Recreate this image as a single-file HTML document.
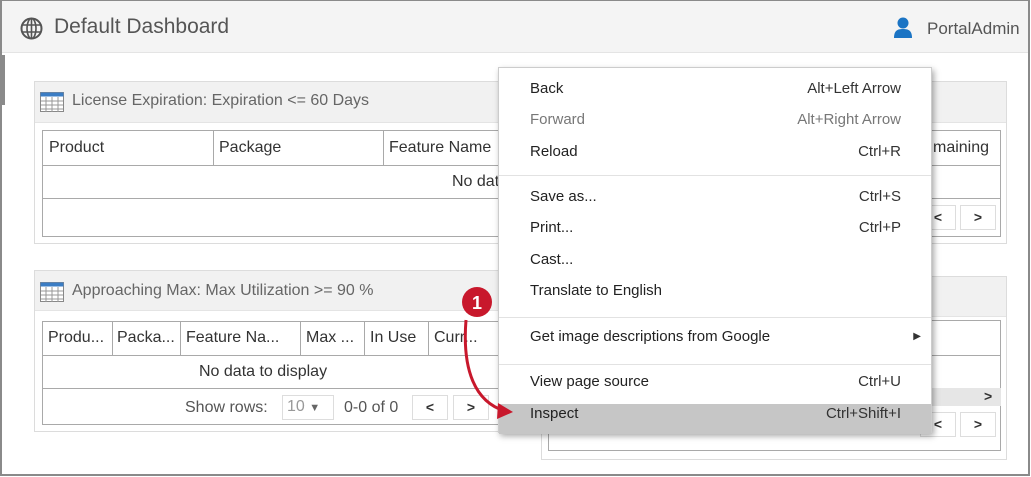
<!DOCTYPE html>
<html><head><style>
*{margin:0;padding:0;box-sizing:border-box}
body{width:1031px;height:477px;overflow:hidden;background:#fff;font-family:"Liberation Sans",sans-serif;position:relative}
.a{position:absolute}
.frame{left:0;top:0;width:1030px;height:476px;border:2px solid #8a8a8a;border-top-width:1px}
.hdr{left:2px;top:1px;width:1026px;height:52px;background:#f4f4f4;border-bottom:1px solid #e4e4e4}
.panel{border:1px solid #dcdcdc;background:#fff}
.ph{background:#f1f1f1;border-bottom:1px solid #e4e4e4}
.pt{font-size:16px;color:#666}
.tbl{border:1px solid #a9a9a9}
.cell{font-size:16px;color:#333;white-space:nowrap}
.vl{width:1px;background:#a9a9a9}
.hl{height:1px;background:#a9a9a9}
.btn{border:1px solid #ddd;background:#fff;width:36px;height:25px;font-size:14px;color:#333;text-align:center;line-height:22px;font-weight:bold}
.menu{left:498px;top:67px;width:434px;height:366px;background:#fff;border:1px solid #ccc;box-shadow:2px 3px 6px rgba(0,0,0,.35)}
.mi{position:absolute;left:31px;right:30px;font-size:15px;color:#222;height:20px;line-height:20px}
.mi span{float:right;color:#333}
.sep{position:absolute;left:0;right:0;height:1px;background:#e2e2e2}
</style></head><body>
<div class="a hdr"></div>
<svg class="a" style="left:20px;top:17px" width="23" height="23" viewBox="0 0 23 23"><circle cx="11.5" cy="11.5" r="10" fill="none" stroke="#555" stroke-width="2"/><ellipse cx="11.5" cy="11.5" rx="4.5" ry="10" fill="none" stroke="#555" stroke-width="1.6"/><path d="M2 8h19M2 15h19M11.5 1.5v20" stroke="#555" stroke-width="1.6"/></svg>
<div class="a" style="left:54px;top:15px;font-size:21px;color:#555">Default Dashboard</div>
<svg class="a" style="left:893px;top:17px" width="20" height="22" viewBox="0 0 20 22"><circle cx="10" cy="6" r="5.5" fill="#1b74c4"/><path d="M1 21c0-7 3-9 9-9s9 2 9 9z" fill="#1b74c4"/></svg>
<div class="a" style="left:927px;top:19px;font-size:17px;color:#555">PortalAdmin</div>
<div class="a" style="left:0;top:55px;width:5px;height:50px;background:#8a8a8a"></div>

<!-- panel 1 -->
<div class="a panel" style="left:34px;top:81px;width:973px;height:163px"></div>
<div class="a ph" style="left:35px;top:82px;width:971px;height:41px"></div>
<svg class="a" style="left:40px;top:92px" width="24" height="20" viewBox="0 0 24 20"><rect x="0.5" y="0.5" width="23" height="19" fill="#fff" stroke="#888"/><rect x="0.5" y="0.5" width="23" height="4" fill="#3b7dc4"/><path d="M6 5v15M12 5v15M18 5v15M1 9h22M1 13h22M1 17h22" stroke="#999" stroke-width="1"/></svg>
<div class="a pt" style="left:72px;top:92px">License Expiration: Expiration &lt;= 60 Days</div>
<div class="a tbl" style="left:42px;top:130px;width:959px;height:107px"></div>
<div class="a hl" style="left:42px;top:165px;width:959px"></div>
<div class="a hl" style="left:42px;top:198px;width:959px"></div>
<div class="a vl" style="left:213px;top:130px;height:35px"></div>
<div class="a vl" style="left:383px;top:130px;height:35px"></div>
<div class="a cell" style="left:49px;top:139px">Product</div>
<div class="a cell" style="left:219px;top:139px">Package</div>
<div class="a cell" style="left:389px;top:139px">Feature Name</div>
<div class="a cell" style="left:933px;top:139px">maining</div>
<div class="a cell" style="left:452px;top:173px">No data</div>
<div class="a btn" style="left:920px;top:205px">&lt;</div>
<div class="a btn" style="left:960px;top:205px">&gt;</div>

<!-- panel 2 left -->
<div class="a panel" style="left:34px;top:270px;width:500px;height:162px"></div>
<div class="a ph" style="left:35px;top:271px;width:498px;height:40px"></div>
<svg class="a" style="left:40px;top:282px" width="24" height="20" viewBox="0 0 24 20"><rect x="0.5" y="0.5" width="23" height="19" fill="#fff" stroke="#888"/><rect x="0.5" y="0.5" width="23" height="4" fill="#3b7dc4"/><path d="M6 5v15M12 5v15M18 5v15M1 9h22M1 13h22M1 17h22" stroke="#999" stroke-width="1"/></svg>
<div class="a pt" style="left:72px;top:282px">Approaching Max: Max Utilization &gt;= 90 %</div>

<!-- panel 2 right -->
<div class="a panel" style="left:541px;top:276px;width:466px;height:184px"></div>
<div class="a ph" style="left:542px;top:277px;width:464px;height:40px"></div>
<div class="a tbl" style="left:548px;top:320px;width:453px;height:131px"></div>
<div class="a hl" style="left:548px;top:355px;width:453px"></div>
<div class="a" style="left:548px;top:388px;width:453px;height:18px;background:#e6e6e6"></div>
<div class="a cell" style="left:984px;top:388px;font-size:14px;font-weight:bold">&gt;</div>
<div class="a btn" style="left:920px;top:412px">&lt;</div>
<div class="a btn" style="left:960px;top:412px">&gt;</div>

<div class="a tbl" style="left:42px;top:321px;width:470px;height:104px;background:#fff"></div>
<div class="a hl" style="left:42px;top:355px;width:470px"></div>
<div class="a hl" style="left:42px;top:388px;width:470px"></div>
<div class="a vl" style="left:112px;top:321px;height:34px"></div>
<div class="a vl" style="left:180px;top:321px;height:34px"></div>
<div class="a vl" style="left:300px;top:321px;height:34px"></div>
<div class="a vl" style="left:364px;top:321px;height:34px"></div>
<div class="a vl" style="left:428px;top:321px;height:34px"></div>
<div class="a cell" style="left:48px;top:329px">Produ...</div>
<div class="a cell" style="left:117px;top:329px">Packa...</div>
<div class="a cell" style="left:186px;top:329px">Feature Na...</div>
<div class="a cell" style="left:306px;top:329px">Max ...</div>
<div class="a cell" style="left:370px;top:329px">In Use</div>
<div class="a cell" style="left:434px;top:329px">Curr...</div>
<div class="a cell" style="left:199px;top:363px">No data to display</div>
<div class="a cell" style="left:185px;top:399px;color:#555">Show rows:</div>
<div class="a" style="left:282px;top:395px;width:52px;height:25px;border:1px solid #ddd;font-size:16px;color:#999;padding:2px 0 0 4px">10 <span style="font-size:11px;color:#666">&#9660;</span></div>
<div class="a cell" style="left:344px;top:399px;color:#555">0-0 of 0</div>
<div class="a btn" style="left:412px;top:395px">&lt;</div>
<div class="a btn" style="left:453px;top:395px">&gt;</div>

<!-- menu -->
<div class="a menu">
<div class="mi" style="top:11px">Back<span>Alt+Left Arrow</span></div>
<div class="mi" style="top:42px;color:#777">Forward<span style="color:#777">Alt+Right Arrow</span></div>
<div class="mi" style="top:74px">Reload<span>Ctrl+R</span></div>
<div class="sep" style="top:107px"></div>
<div class="mi" style="top:119px">Save as...<span>Ctrl+S</span></div>
<div class="mi" style="top:150px">Print...<span>Ctrl+P</span></div>
<div class="mi" style="top:182px">Cast...</div>
<div class="mi" style="top:213px">Translate to English</div>
<div class="sep" style="top:249px"></div>
<div class="mi" style="top:259px;right:10px">Get image descriptions from Google<span style="font-size:10px">&#9654;</span></div>
<div class="sep" style="top:296px"></div>
<div class="mi" style="top:304px">View page source<span>Ctrl+U</span></div>
<div class="a" style="left:0;top:336px;width:432px;height:30px;background:#c6c6c6"></div>
<div class="mi" style="top:335px;line-height:22px">Inspect<span>Ctrl+Shift+I</span></div>
</div>

<!-- annotation -->
<svg class="a" style="left:440px;top:280px" width="90" height="150" viewBox="440 280 90 150">
<path d="M466 320 C462 370 475 402 505 411" fill="none" stroke="#c8182c" stroke-width="3"/>
<path d="M498 403 L513 412 L497 419 Z" fill="#c8182c"/>
<circle cx="477" cy="302" r="15" fill="#c8182c"/>
<text x="477" y="309" text-anchor="middle" font-family="Liberation Sans" font-weight="bold" font-size="18" fill="#fff">1</text>
</svg>
<div class="a frame"></div>
</body></html>
